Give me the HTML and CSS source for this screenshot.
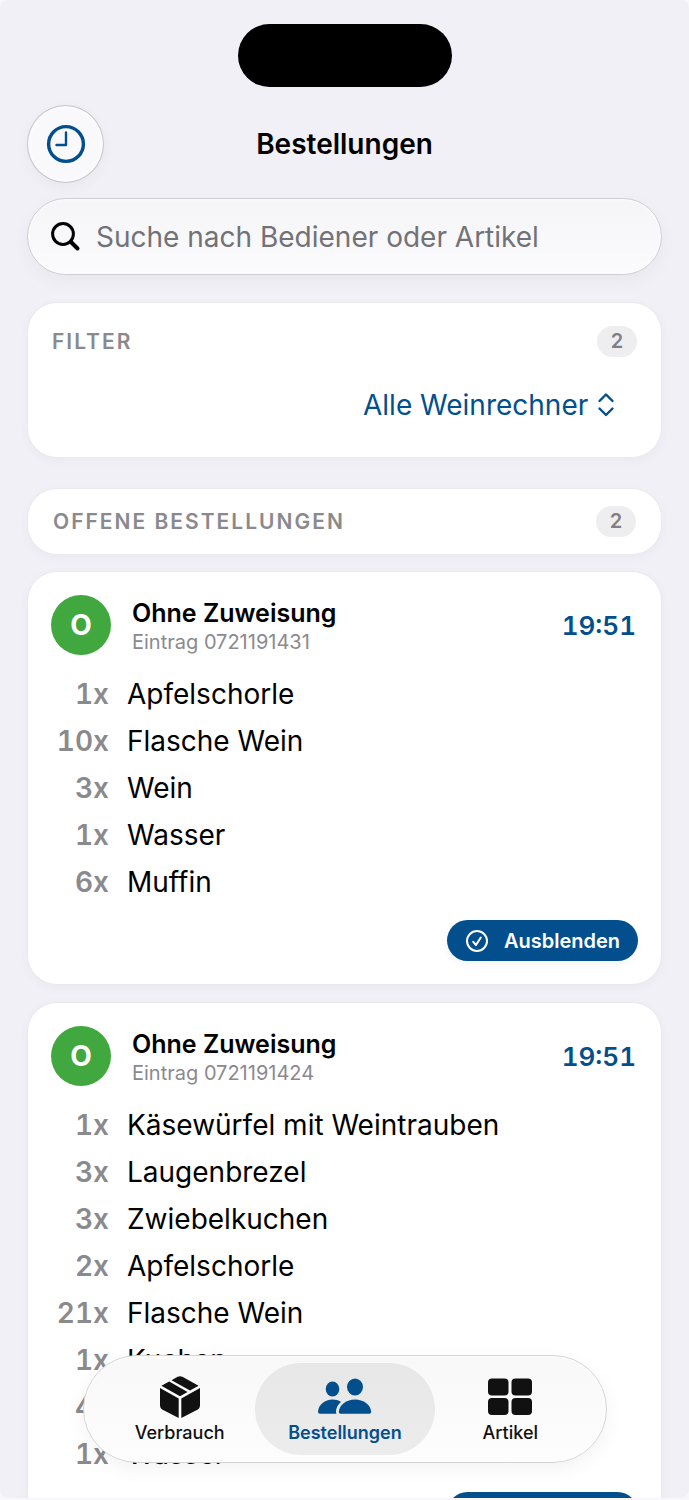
FILE: index.html
```html
<!doctype html>
<html lang="de">
  <head>
    <meta charset="UTF-8" />
    <meta name="viewport" content="width=device-width, initial-scale=1.0" />
    <title>Bestellungen</title>
    <link rel="stylesheet" href="styles.css">
  </head>
  <body>
    <div class="screen">
      <div class="island"></div>

      <header class="header">
        <button class="round-button" type="button" aria-label="Verlauf">
          <svg width="40" height="40" viewBox="0 0 40 40" fill="none" stroke="currentColor" stroke-linecap="round" stroke-linejoin="round">
            <circle cx="20" cy="20" r="17.4" stroke-width="3.4" />
            <path d="M20 8.5V21H10.500" stroke-width="2.4" />
          </svg>
        </button>
        <h1>Bestellungen</h1>
      </header>

      <label class="search">
        <svg width="30" height="30" viewBox="0 0 30 30" fill="none" stroke="currentColor" stroke-linecap="round">
          <circle cx="12" cy="12" r="10.400" stroke-width="3" />
          <path d="M20 20L26.500 26.500" stroke-width="4" />
        </svg>
        <input type="search" aria-label="Suche" placeholder="Suche nach Bediener oder Artikel" />
      </label>

      <main>
        <section class="card filter-card">
          <div class="section-head">
            <h2>FILTER</h2>
            <span class="count">2</span>
          </div>
          <div class="filter-row">
            <select class="filter-select" id="filter" aria-label="Filter">
              <option>Alle Weinrechner</option>
            </select>
            <svg width="18" height="26" viewBox="0 0 18 26" fill="none" stroke="currentColor" stroke-width="2.4" stroke-linecap="round" stroke-linejoin="round">
              <path d="M2.500 9L9 2.500L15.500 9M2.500 16.500L9 23L15.500 16.500" />
            </svg>
          </div>
        </section>

        <section class="card open-card">
          <div class="section-head">
            <h2>OFFENE BESTELLUNGEN</h2>
            <span class="count">2</span>
          </div>
        </section>

        <article class="card order">
          <div class="order-head">
            <div class="avatar">O</div>
            <div class="order-name">
              <h3>Ohne Zuweisung</h3>
              <p>Eintrag 0721191431</p>
            </div>
            <time>19:51</time>
          </div>
          <ul class="items">
            <li><span class="qty">1x</span>Apfelschorle</li>
            <li><span class="qty">10x</span>Flasche Wein</li>
            <li><span class="qty">3x</span>Wein</li>
            <li><span class="qty">1x</span>Wasser</li>
            <li><span class="qty">6x</span>Muffin</li>
          </ul>
          <button class="hide-button" type="button">
            <svg width="24" height="24" viewBox="0 0 24 24" fill="none" stroke="currentColor" stroke-width="2" stroke-linecap="round" stroke-linejoin="round">
              <circle cx="12" cy="12" r="10" />
              <path d="M8.200 12.800L11 16L15.800 8.500" />
            </svg>
            Ausblenden
          </button>
        </article>

        <article class="card order">
          <div class="order-head">
            <div class="avatar">O</div>
            <div class="order-name">
              <h3>Ohne Zuweisung</h3>
              <p>Eintrag 0721191424</p>
            </div>
            <time>19:51</time>
          </div>
          <ul class="items">
            <li><span class="qty">1x</span>Käsewürfel mit Weintrauben</li>
            <li><span class="qty">3x</span>Laugenbrezel</li>
            <li><span class="qty">3x</span>Zwiebelkuchen</li>
            <li><span class="qty">2x</span>Apfelschorle</li>
            <li><span class="qty">21x</span>Flasche Wein</li>
            <li><span class="qty">1x</span>Kuchen</li>
            <li><span class="qty">4x</span>Wein</li>
            <li><span class="qty">1x</span>Wasser</li>
          </ul>
          <button class="hide-button" type="button">
            <svg width="24" height="24" viewBox="0 0 24 24" fill="none" stroke="currentColor" stroke-width="2" stroke-linecap="round" stroke-linejoin="round">
              <circle cx="12" cy="12" r="10" />
              <path d="M8.200 12.800L11 16L15.800 8.500" />
            </svg>
            Ausblenden
          </button>
        </article>
      </main>

      <nav class="tabbar">
        <a class="tab" href="#verbrauch">
          <svg width="42" height="44" viewBox="0 0 42 44" fill="currentColor">
            <path d="M1 13L19.700 23.500V43L3.200 34.500Q1 33.200 1 30.500Z" />
            <path d="M41 13L22.300 23.500V43L38.800 34.500Q41 33.200 41 30.500Z" />
            <path d="M2.400 10.800L10.200 6.500L28.600 17L21 21.300Z" />
            <path d="M12.500 5.200L18.600 1.800Q21 .6 23.400 1.800L39.600 10.800L31 15.600Z" />
          </svg>
          <span>Verbrauch</span>
        </a>
        <a class="tab active" href="#bestellungen" aria-current="page">
          <svg width="54" height="44" viewBox="0 0 54 44" fill="currentColor">
            <ellipse cx="14.500" cy="14" rx="6.800" ry="7.400" />
            <path d="M2 38.800Q0 38.800 0 36.800C.5 29.500 7 24.500 14.500 24.500C17.500 24.500 20.500 25.300 23 26.900C19.500 29.800 18 33.500 18 36.800Q18 38 18.500 38.800Z" />
            <ellipse cx="37" cy="12" rx="8" ry="8.600" />
            <path d="M22.500 38.800Q20.800 38.800 20.800 36.800C21.500 29.500 28.500 24.500 37 24.500C45.500 24.500 52.500 29.500 53.200 36.800Q53.200 38.800 51.500 38.800Z" />
          </svg>
          <span>Bestellungen</span>
        </a>
        <a class="tab" href="#artikel">
          <svg width="44" height="44" viewBox="0 0 44 44" fill="currentColor">
            <rect x="0" y="3.500" width="20.500" height="17" rx="4" />
            <rect x="23.500" y="3.500" width="20.500" height="17" rx="4" />
            <rect x="0" y="23" width="20.500" height="17" rx="4" />
            <rect x="23.500" y="23" width="20.500" height="17" rx="4" />
          </svg>
          <span>Artikel</span>
        </a>
      </nav>
    </div>
  </body>
</html>
```
FILE: styles.css
```css
* {
  box-sizing: border-box;
}

body {
  margin: 0;
  background: #f8f8fc;
  color: #000;
  font-family: Inter, "Liberation Sans", sans-serif;
}

h1,
h2,
h3,
p,
ul {
  margin: 0;
  padding: 0;
}

button,
input,
select {
  font-family: inherit;
}

.screen {
  position: relative;
  border-radius: 8px;
  background: #f1f0f6;
  padding: 24px 27px 0;
  height: calc(100vh - 2px);
  overflow: hidden;
}

.island {
  margin: 0 auto;
  border-radius: 32px;
  background: #000;
  width: 214px;
  height: 63px;
}

.header {
  display: grid;
  grid-template-columns: 77px 1fr 77px;
  align-items: center;
  margin-top: 18px;
}

.header h1 {
  font-weight: 600;
  font-size: 28px;
  text-align: center;
}

.round-button {
  display: flex;
  justify-content: center;
  align-items: center;
  border: 1px solid #c6c6ca;
  border-radius: 50%;
  box-shadow: 0 4px 14px rgba(0, 0, 0, 0.04), inset 0 0 6px #fff;
  background: #f9f9fc;
  padding: 0;
  height: 78px;
  color: #034f8d;
}

.search {
  display: flex;
  align-items: center;
  gap: 15px;
  margin-top: 15px;
  border: 1px solid #cfcfd3;
  border-radius: 39px;
  box-shadow: 0 6px 18px rgba(0, 0, 0, 0.04), inset 0 0 4px #fff;
  background: linear-gradient(#f5f5f8, #fbfbfe);
  padding: 0 23px;
  height: 77px;
}

.search input {
  flex: 1;
  outline: none;
  border: none;
  background: none;
  padding: 0;
  min-width: 0;
  font-size: 28px;
}

.search input::placeholder {
  opacity: 1;
  color: #727276;
}

.card {
  border: 1px solid #eae9ef;
  border-radius: 30px;
  box-shadow: 0 3px 12px rgba(0, 0, 0, 0.03);
  background: #fff;
}

.filter-card {
  margin-top: 27px;
  padding: 23px 24px 29px;
}

.open-card {
  margin-top: 30px;
  padding: 17px 25px;
}

.section-head {
  display: flex;
  justify-content: space-between;
  align-items: center;
}

.section-head h2 {
  color: #8a8a8e;
  font-weight: 600;
  font-size: 21px;
  line-height: 24px;
  letter-spacing: 2px;
}

.count {
  border-radius: 16px;
  background: #eeeef0;
  width: 40px;
  color: #808084;
  font-weight: 600;
  font-size: 20px;
  line-height: 31px;
  text-align: center;
}

.filter-row {
  display: flex;
  justify-content: flex-end;
  align-items: center;
  gap: 8px;
  margin-top: 24px;
  padding-right: 22px;
  height: 47px;
  color: #034f8d;
}

.filter-select {
  appearance: none;
  border: none;
  background: none;
  padding: 0;
  color: inherit;
  font-size: 28px;
}

.order {
  display: flex;
  flex-direction: column;
  margin-top: 17px;
  padding: 23px;
}

.open-card + .order {
  margin-top: 16px;
}

.order-head {
  display: flex;
  align-items: center;
  height: 60px;
}

.avatar {
  border-radius: 50%;
  background: #40a83e;
  width: 60px;
  color: #fff;
  font-weight: 700;
  font-size: 28px;
  line-height: 60px;
  text-align: center;
}

.order-name {
  flex: 1;
  margin-left: 21px;
  padding-top: 4px;
}

.order-name h3 {
  font-weight: 600;
  font-size: 25px;
  line-height: 30px;
}

.order-name p {
  color: #8a8a8e;
  font-size: 20px;
  line-height: 28px;
}

.order-head time {
  padding-right: 2px;
  color: #034f8d;
  font-weight: 600;
  font-size: 26px;
  font-variant-numeric: tabular-nums;
}

.items {
  margin: 16px 0 14px;
  font-size: 28px;
  line-height: 47px;
  list-style: none;
}

.items li {
  display: flex;
  gap: 18px;
}

.qty {
  width: 58px;
  color: #8a8a8e;
  font-weight: 600;
  text-align: right;
  font-variant-numeric: tabular-nums;
}

.hide-button {
  display: flex;
  align-items: center;
  align-self: flex-end;
  gap: 15px;
  border: none;
  border-radius: 21px;
  box-shadow: 0 4px 10px rgba(0, 0, 0, 0.04);
  background: #034f8d;
  padding: 0 18px;
  height: 41px;
  color: #fff;
  font-weight: 600;
  font-size: 20px;
}

.tabbar {
  display: grid;
  position: absolute;
  right: 82px;
  bottom: 35px;
  left: 83px;
  grid-template-columns: repeat(3, 1fr);
  border: 1px solid #d4d4d6;
  border-radius: 54px;
  box-shadow: 0 6px 20px rgba(0, 0, 0, 0.05), inset 0 0 5px #fff;
  background: linear-gradient(#f8f8f8, #fdfdfd);
  padding: 7px 13px;
}

.tab {
  display: flex;
  flex-direction: column;
  align-items: center;
  gap: 4px;
  padding: 12px 0;
  color: #111;
  font-weight: 500;
  font-size: 18px;
  line-height: 20px;
  text-decoration: none;
}

.tab.active {
  margin: 0 -7px;
  border-radius: 46px;
  background: linear-gradient(#e7e7e7, #ececec);
  color: #034f8d;
  font-weight: 600;
}
```
